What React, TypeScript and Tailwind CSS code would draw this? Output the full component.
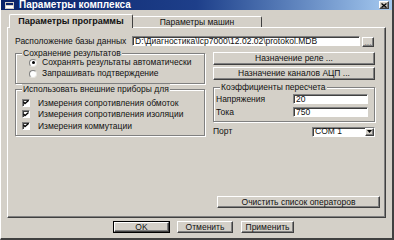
import React from 'react';

const raised =
  'bg-[#d4d0c8] border-t border-l border-t-white border-l-white border-r border-b border-r-[#404040] border-b-[#404040] shadow-[inset_-1px_-1px_0_#808080]';
const sunken =
  'bg-white border-t border-l border-t-[#808080] border-l-[#808080] border-r border-b border-r-white border-b-white shadow-[inset_1px_1px_0_#404040]';
const etched =
  'border border-[#808080] shadow-[inset_1px_1px_0_#fff,1px_1px_0_#fff]';

function Button({ label, className = '' }: { label: string; className?: string }) {
  return (
    <div className={`${raised} flex items-center justify-center leading-none whitespace-nowrap ${className}`}>
      {label}
    </div>
  );
}

function Group({
  title,
  className = '',
  children,
}: {
  title: string;
  className?: string;
  children: React.ReactNode;
}) {
  return (
    <div className={`${etched} ${className}`}>
      <div className="-mt-[6px] ml-[6px] px-[1px] w-fit bg-[#d4d0c8] leading-[10px] whitespace-nowrap">{title}</div>
      {children}
    </div>
  );
}

function Radio({ checked, label }: { checked?: boolean; label: string }) {
  return (
    <div className="flex items-center h-[11px]">
      <span className="ml-[13px] w-[8px] h-[8px] rounded-full bg-white border border-t-[#808080] border-l-[#808080] border-r-[#e8e6e0] border-b-[#e8e6e0] flex items-center justify-center">
        {checked && <span className="w-[3px] h-[3px] rounded-full bg-black" />}
      </span>
      <span className="ml-[5px] leading-none whitespace-nowrap">{label}</span>
    </div>
  );
}

function Check({ label }: { label: string }) {
  return (
    <div className="flex items-center h-[11.5px]">
      <span className="ml-[6px] w-[8px] h-[8px] bg-white border border-t-[#808080] border-l-[#808080] border-r-white border-b-white shadow-[inset_1px_1px_0_#404040] flex items-center justify-center">
        <svg width="6" height="5" viewBox="0 0 6 5">
          <path d="M0.5 2 L2 3.5 L5.5 0.5" stroke="#000" strokeWidth="1.3" fill="none" />
        </svg>
      </span>
      <span className="ml-[8px] leading-none whitespace-nowrap">{label}</span>
    </div>
  );
}

export default function App() {
  return (
    <div className="w-[394px] h-[240px] bg-[#d4d0c8] font-['Liberation_Sans',sans-serif] text-[8.5px] text-[#111] border-l border-l-white border-r-2 border-r-[#404040] border-b-2 border-b-[#404040] flex flex-col overflow-hidden">
      {/* title bar */}
      <div className="h-[10px] flex items-center bg-linear-to-r from-[#0a246a] via-[#1e3f8a] to-[#a6caf0]">
        <svg width="9" height="7" viewBox="0 0 9 7" className="ml-[4px]">
          <rect x="0" y="0" width="9" height="7" fill="#d4d0c8" />
          <rect x="1" y="1" width="7" height="2" fill="#0a246a" />
          <rect x="1" y="4" width="7" height="2" fill="#fff" />
        </svg>
        <span className="ml-[5px] text-white font-bold text-[10px] leading-none whitespace-nowrap">Параметры комплекса</span>
        <div className={`${raised} ml-auto mr-[3px] w-[10px] h-[8px] flex items-center justify-center`}>
          <svg width="6" height="5" viewBox="0 0 6 5">
            <path d="M0.5 0.5 L5.5 4.5 M5.5 0.5 L0.5 4.5" stroke="#000" strokeWidth="1.3" />
          </svg>
        </div>
      </div>

      {/* tabs */}
      <div className="mt-[4px] ml-[8px] h-[13px] flex items-end">
        <div className="relative z-10 -mb-[1px] w-[124px] h-[14px] bg-[#d4d0c8] border-t border-l border-white border-r border-r-[#404040] rounded-t-[2px] flex items-center justify-center font-bold text-[9px] leading-none whitespace-nowrap">
          Параметры программы
        </div>
        <div className="w-[129px] h-[11px] bg-[#d4d0c8] border-t border-t-white border-r border-r-[#404040] rounded-tr-[2px] flex items-center justify-center leading-none whitespace-nowrap">
          Параметры машин
        </div>
      </div>

      {/* panel */}
      <div className="ml-[6px] w-[379px] h-[191px] border-t border-l border-white border-r border-b border-r-[#404040] border-b-[#404040] shadow-[inset_-1px_-1px_0_#808080] flex flex-col">
        <div className="mt-[8px] ml-[7px] h-[10px] flex items-center">
          <span className="w-[117px] leading-none whitespace-nowrap">Расположение базы данных</span>
          <div className={`${sunken} w-[228px] h-[10px] flex items-center pl-[2px] leading-none whitespace-nowrap`}>
            D:\Диагностика\Icp7000\12.02.02\protokol.MDB
          </div>
          <Button label="..." className="ml-[2px] w-[12px] h-[10px] mt-[2px] text-[#808080]" />
        </div>

        <div className="mt-[7px] ml-[7px] flex gap-[8px]">
          {/* left column */}
          <div className="w-[190px] flex flex-col">
            <Group title="Сохранение результатов" className="h-[31px]">
              <div className="mt-[-1px] flex flex-col">
                <Radio checked label="Сохранять результаты автоматически" />
                <Radio label="Запрашивать подтверждение" />
              </div>
            </Group>
            <Group title="Использовать внешние приборы для" className="mt-[5px] h-[47px]">
              <div className="mt-[3px] flex flex-col">
                <Check label="Измерения сопротивления обмоток" />
                <Check label="Измерения сопротивления изоляции" />
                <Check label="Измерения коммутации" />
              </div>
            </Group>
          </div>

          {/* right column */}
          <div className="w-[162px] flex flex-col">
            <Button label="Назначение реле ..." className="-mt-[1px] h-[13px]" />
            <Button label="Назначение каналов АЦП ..." className="mt-[2px] h-[13px]" />
            <Group title="Коэффициенты пересчета" className="mt-[7px] h-[35px]">
              <div className="mt-[2px] flex flex-col gap-[3px]">
                <div className="flex items-center h-[10px]">
                  <span className="ml-[2px] w-[77px] leading-none">Напряжения</span>
                  <div className={`${sunken} w-[75px] h-[10px] flex items-center pl-[2px] leading-none`}>20</div>
                </div>
                <div className="flex items-center h-[10px]">
                  <span className="ml-[2px] w-[77px] leading-none">Тока</span>
                  <div className={`${sunken} w-[75px] h-[10px] flex items-center pl-[2px] leading-none`}>750</div>
                </div>
              </div>
            </Group>
            <div className="mt-[5px] h-[9px] flex items-center">
              <span className="w-[99px] leading-none">Порт</span>
              <div className={`${sunken} w-[63px] h-[10px] flex items-center pl-[2px] leading-none`}>
                <span className="flex-1">COM 1</span>
                <div className={`${raised} w-[9px] h-[8px] flex items-center justify-center`}>
                  <svg width="5" height="3" viewBox="0 0 5 3">
                    <path d="M0 0 H5 L2.5 3 Z" fill="#000" />
                  </svg>
                </div>
              </div>
            </div>
          </div>
        </div>

        <div className="mt-auto mb-[9px] mr-[5px] flex justify-end">
          <Button label="Очистить список операторов" className="w-[163px] h-[12px]" />
        </div>
      </div>

      {/* bottom buttons */}
      <div className="mt-[3px] flex">
        <div className="ml-[112px] w-[57px] h-[12px] border border-black flex">
          <Button label="OK" className="flex-1" />
        </div>
        <Button label="Отменить" className="ml-[7px] w-[56px] h-[12px]" />
        <Button label="Применить" className="ml-[8px] w-[53px] h-[12px]" />
      </div>
    </div>
  );
}
